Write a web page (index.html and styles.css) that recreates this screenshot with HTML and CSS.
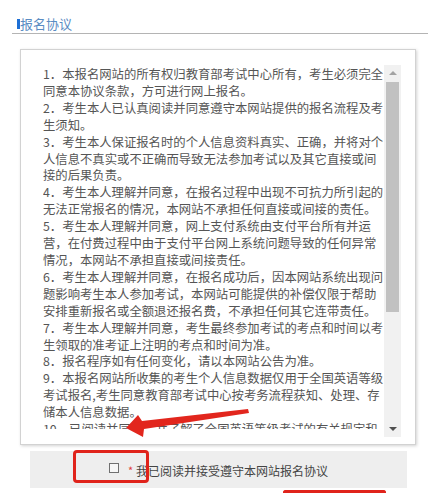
FILE: index.html
```html
<!DOCTYPE html>
<html lang="zh-CN">
<head>
<meta charset="utf-8">
<title>报名协议</title>
<link rel="stylesheet" href="styles.css">
</head>
<body>
<div class="page">
  <div class="title"><span class="title-bar"></span><span class="title-text">报名协议</span></div>
  <div class="box">
    <div class="content">
      <p>1．本报名网站的所有权归教育部考试中心所有，考生必须完全同意本协议条款，方可进行网上报名。</p>
      <p>2．考生本人已认真阅读并同意遵守本网站提供的报名流程及考生须知。</p>
      <p>3．考生本人保证报名时的个人信息资料真实、正确，并将对个人信息不真实或不正确而导致无法参加考试以及其它直接或间接的后果负责。</p>
      <p>4．考生本人理解并同意，在报名过程中出现不可抗力所引起的无法正常报名的情况，本网站不承担任何直接或间接的责任。</p>
      <p>5．考生本人理解并同意，网上支付系统由支付平台所有并运营，在付费过程中由于支付平台网上系统问题导致的任何异常情况，本网站不承担直接或间接责任。</p>
      <p>6．考生本人理解并同意，在报名成功后，因本网站系统出现问题影响考生本人参加考试，本网站可能提供的补偿仅限于帮助安排重新报名或全额退还报名费，不承担任何其它连带责任。</p>
      <p>7．考生本人理解并同意，考生最终参加考试的考点和时间以考生领取的准考证上注明的考点和时间为准。</p>
      <p>8．报名程序如有任何变化，请以本网站公告为准。</p>
      <p>9．本报名网站所收集的考生个人信息数据仅用于全国英语等级考试报名,考生同意教育部考试中心按考务流程获知、处理、存储本人信息数据。</p>
      <p>10．已阅读并同意，并了解了全国英语等级考试的有关规定和要求。</p>
    </div>
    <div class="scrollbar">
      <div class="sb-btn sb-up"><span class="tri-up"></span></div>
      <div class="sb-thumb"></div>
      <div class="sb-rest"></div>
      <div class="sb-btn sb-down"><span class="tri-down"></span></div>
    </div>
  </div>
  <div class="agree">
    <span class="checkbox"></span>
    <span class="star">*</span>
    <span class="agree-text">我已阅读并接受遵守本网站报名协议</span>
  </div>
  <div class="mark mark-check"></div>
  <div class="mark mark-btn"></div>
  <svg class="arrow" width="436" height="493" viewBox="0 0 436 493">
    <polygon points="248,409 249,413 144,429 143,437 126,428 138,415 142,421" fill="#e2261d"/>
  </svg>
</div>
</body>
</html>
```
FILE: styles.css
```css
html, body {
  margin: 0;
  padding: 0;
  background: #ffffff;
}
body {
  font-family: "Noto Sans CJK SC", "Noto Sans", sans-serif;
  width: 436px;
  height: 493px;
  overflow: hidden;
}
.page {
  position: relative;
  width: 436px;
  height: 493px;
  padding-top: 16px;
  box-sizing: border-box;
  overflow: hidden;
}
.title {
  margin: 0 8px 0 12px;
  padding-left: 5px;
  height: 17px;
  border-bottom: 1px solid #b4b4b4;
  display: flex;
  align-items: flex-start;
}
.title-bar {
  width: 3px;
  height: 10px;
  margin-top: 3px;
  background: #1d6fd5;
}
.title-text {
  font-size: 13px;
  line-height: 16px;
  color: #5a8cc3;
}
.box {
  margin: 15px 0 0 20px;
  width: 396px;
  height: 396px;
  box-sizing: border-box;
  border: 1px solid #d2d2d2;
  box-shadow: 1px 1px 3px rgba(0, 0, 0, 0.18);
  padding: 15px 14px 0 22px;
  display: flex;
  align-items: flex-start;
  background: #fff;
}
.content {
  width: 342px;
  height: 363px;
  margin-top: 1px;
  overflow: hidden;
  font-size: 12.35px;
  line-height: 16.9px;
  color: #555555;
}
.content p {
  margin: 0;
}
.scrollbar {
  width: 17px;
  height: 372px;
  margin-left: -1px;
  background: #f1f1f1;
  display: flex;
  flex-direction: column;
}
.sb-btn {
  height: 16px;
  display: flex;
  align-items: center;
  justify-content: center;
  flex: none;
}
.tri-up {
  width: 0;
  height: 0;
  border-left: 4px solid transparent;
  border-right: 4px solid transparent;
  border-bottom: 4px solid #a3a3a3;
}
.tri-down {
  width: 0;
  height: 0;
  border-left: 4px solid transparent;
  border-right: 4px solid transparent;
  border-top: 4px solid #505050;
}
.sb-thumb {
  height: 230px;
  margin: 1px 2px 0 2px;
  background: #c1c1c1;
  flex: none;
}
.sb-rest {
  flex: 1;
}
.agree {
  margin: 6px 0 0 30px;
  width: 377px;
  height: 37px;
  background: #eeeeee;
  display: flex;
  align-items: center;
  justify-content: center;
  font-size: 12px;
  color: #444444;
}
.checkbox {
  width: 8px;
  height: 8px;
  border: 1px solid #707070;
  background: #f7f7f7;
  margin-right: 9px;
  margin-top: -4px;
}
.star {
  color: #e04040;
  font-size: 11px;
  margin-right: 3px;
}
.agree-text {
  line-height: 16px;
  margin-top: 2px;
}
.mark {
  position: absolute;
  border: 3px solid #e0231b;
  border-radius: 4px;
  box-sizing: border-box;
}
.mark-check {
  left: 73px;
  top: 450px;
  width: 76px;
  height: 33px;
}
.mark-btn {
  left: 283px;
  top: 490px;
  width: 103px;
  height: 3px;
  border-bottom: 0;
  border-radius: 4px 4px 0 0;
}
.arrow {
  position: absolute;
  left: 0;
  top: 0;
  pointer-events: none;
}
```
